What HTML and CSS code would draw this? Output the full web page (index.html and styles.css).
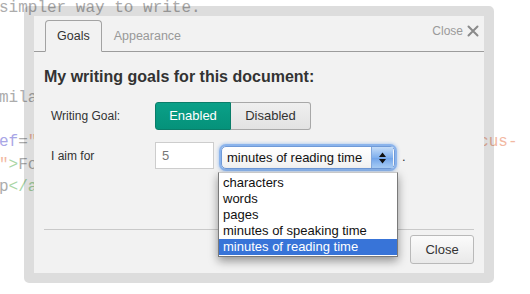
FILE: index.html
```html
<!DOCTYPE html>
<html>
<head>
<meta charset="utf-8">
<link rel="stylesheet" href="styles.css">
</head>
<body>
<pre class="source"><span class="t">simpler way to write.</span>



<span class="t">mila</span>

<span class="an">ef</span><span class="t">=</span><span class="s">"h</span>                                             <span class="s">cus-</span>
<span class="s">"</span><span class="g">&gt;</span><span class="t">Fo</span>
<span class="t">p</span><span class="g">&lt;/a</span></pre>

<div class="dialog">
  <div class="panel">
    <div class="tabbar">
      <div class="tab active">Goals</div>
      <div class="tab">Appearance</div>
      <div class="close-x">Close <svg width="12" height="12" viewBox="0 0 12 12"><path d="M1.5 1.5 L10.5 10.5 M10.5 1.5 L1.5 10.5" stroke="#8a8a8a" stroke-width="2" stroke-linecap="round"/></svg></div>
    </div>
    <div class="body">
      <h2 class="heading">My writing goals for this document:</h2>
      <div class="row row-goal">
        <div class="label">Writing Goal:</div>
        <div class="seg">
          <div class="seg-btn on">Enabled</div>
          <div class="seg-btn off">Disabled</div>
        </div>
      </div>
      <div class="row row-aim">
        <div class="label">I aim for</div>
        <div class="field">5</div>
        <div class="select">
          <span class="select-text">minutes of reading time</span>
          <span class="select-arrows"><svg width="9" height="14" viewBox="0 0 9 14"><path d="M4.5 1.5 L8 6 L1 6 Z M1 8 L8 8 L4.5 12.5 Z" fill="#111"/></svg></span>
          <div class="list">
            <div class="opt">characters</div>
            <div class="opt">words</div>
            <div class="opt">pages</div>
            <div class="opt">minutes of speaking time</div>
            <div class="opt sel">minutes of reading time</div>
          </div>
        </div>
        <span class="dot">.</span>
      </div>
    </div>
    <div class="footer">
      <div class="btn">Close</div>
    </div>
  </div>
</div>
</body>
</html>
```

FILE: styles.css
```css
html, body {
  margin: 0;
  padding: 0;
  background: #fff;
  width: 530px;
  height: 294px;
  overflow: hidden;
}

.source {
  margin: -3px 0 0 -1px;
  font-family: "Liberation Mono", monospace;
  font-size: 16px;
  line-height: 22.4px;
  color: #aaa;
  white-space: pre;
}
.source .t { color: #acacac; }
.source .an { color: #a9a6e6; }
.source .s { color: #f2b8a2; }
.source .g { color: #a9d6a6; }

.dialog {
  position: absolute;
  left: 24px;
  top: 6px;
  width: 470px;
  height: 277px;
  box-sizing: border-box;
  border: 10px solid rgba(0, 0, 0, 0.135);
  border-radius: 5px;
  background-clip: padding-box;
  font-family: "Liberation Sans", Arial, sans-serif;
  color: #333;
}

.panel {
  background: #f2f2f2;
  height: 100%;
  display: flex;
  flex-direction: column;
}

.tabbar {
  height: 35px;
  border-bottom: 1px solid #9c9c9c;
  display: flex;
  align-items: flex-end;
  padding-left: 11px;
}

.tab {
  height: 30px;
  line-height: 30px;
  padding: 0 11px;
  font-size: 12.5px;
  color: #999;
  border: 1px solid transparent;
  margin-bottom: -1px;
}
.tab.active {
  color: #333;
  border-color: #a3a3a3;
  border-bottom-color: #f2f2f2;
  border-radius: 4px 4px 0 0;
  background: #f2f2f2;
}

.close-x {
  margin-left: auto;
  align-self: flex-start;
  margin-top: 7px;
  padding-right: 5px;
  font-size: 12px;
  line-height: 16px;
  color: #9a9a9a;
  display: flex;
  align-items: center;
  gap: 4px;
}

.body {
  padding: 0 10px;
}

.heading {
  margin: 15px 0 0;
  font-size: 16px;
  line-height: 20px;
  font-weight: bold;
  color: #333;
}

.row {
  display: flex;
  align-items: flex-start;
}
.row-goal { margin-top: 15px; }
.row-aim { margin-top: 12px; }

.label {
  box-sizing: border-box;
  width: 111px;
  padding-left: 7px;
  font-size: 12px;
  color: #333;
}
.row-goal .label { line-height: 28px; }
.row-aim .label { line-height: 29px; }

.seg {
  display: flex;
  height: 28px;
}
.seg-btn {
  box-sizing: border-box;
  height: 28px;
  line-height: 26px;
  font-size: 13px;
  text-align: center;
}
.seg-btn.on {
  width: 76px;
  background: linear-gradient(#0aa088, #05927a);
  border: 1px solid #0a7d69;
  border-radius: 3px 0 0 3px;
  color: #fff;
}
.seg-btn.off {
  width: 80px;
  background: linear-gradient(#efefef, #e2e2e2);
  border: 1px solid #a8a8a8;
  border-left: none;
  border-radius: 0 3px 3px 0;
  color: #333;
}

.field {
  box-sizing: border-box;
  width: 59px;
  height: 27px;
  background: #fff;
  border: 1px solid #cdcdcd;
  padding-left: 6px;
  font-size: 13px;
  line-height: 25px;
  color: #777;
}

.select {
  position: relative;
  box-sizing: border-box;
  margin: 4px 0 0 7px;
  width: 174px;
  height: 23px;
  border: 1px solid #6f9ad8;
  border-radius: 5px;
  background: linear-gradient(#ffffff, #f1f1f1);
  box-shadow: 0 0 0 2px rgba(120, 168, 235, 0.75), 0 0 3px 3px rgba(120, 168, 235, 0.45);
  display: flex;
}
.select-text {
  flex: 1;
  padding-left: 5px;
  font-size: 13px;
  line-height: 21px;
  color: #111;
}
.select-arrows {
  width: 21px;
  margin: 0 1px 0 0;
  background: linear-gradient(#c4dcf8, #80b0ee 50%, #6fa2e8 51%, #a8cdf6);
  border-left: 1px solid #82a7dc;
  display: flex;
  align-items: center;
  justify-content: center;
}

.list {
  position: absolute;
  left: -4px;
  top: 25px;
  width: 180px;
  box-sizing: border-box;
  background: #fff;
  border: 1px solid #7a7a7a;
  border-top-color: #c8c8c8;
  padding: 2px 0 1px;
  box-shadow: 0 4px 9px rgba(0, 0, 0, 0.4);
  z-index: 2;
}
.opt {
  height: 16px;
  line-height: 16px;
  font-size: 13px;
  padding-left: 4px;
  color: #111;
}
.opt.sel {
  background: #3874d8;
  color: #fff;
}

.dot {
  margin-left: 7px;
  font-size: 13px;
  line-height: 29px;
  color: #333;
}

.footer {
  margin: auto 10px 0;
  border-top: 1px solid #c9c9c9;
  padding: 5px 0 9px;
  display: flex;
  justify-content: flex-end;
}
.btn {
  box-sizing: border-box;
  width: 64px;
  height: 29px;
  line-height: 27px;
  text-align: center;
  font-size: 13px;
  color: #333;
  background: linear-gradient(#fbfbfb, #e9e9e9);
  border: 1px solid #b9b9b9;
  border-radius: 3px;
}
```
